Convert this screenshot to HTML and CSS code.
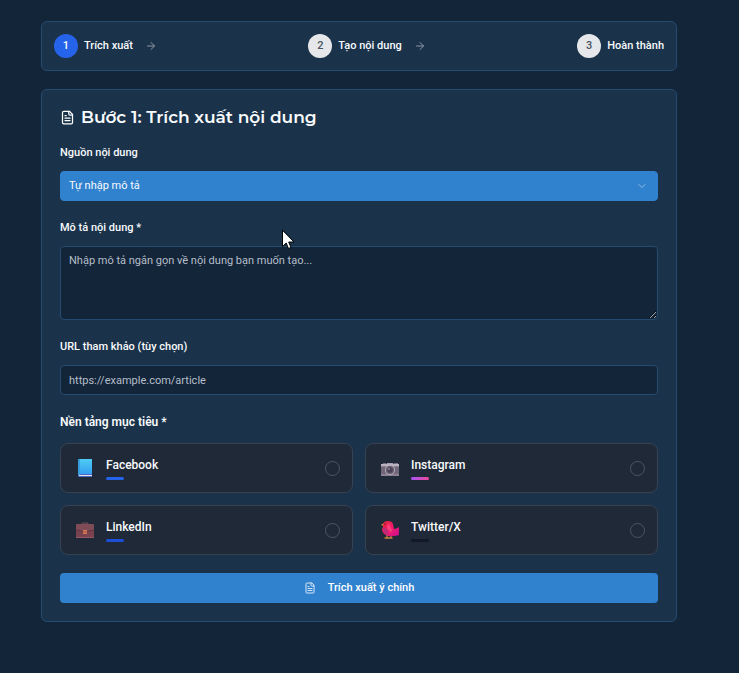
FILE: index.html
```html
<!DOCTYPE html>
<html lang="vi">
<head>
<meta charset="utf-8">
<meta name="viewport" content="width=device-width, initial-scale=1">
<title>Trích xuất nội dung</title>
<link rel="stylesheet" href="styles.css">
</head>
<body>
<main class="page">
  <ol class="panel steps">
    <li class="step">
      <span class="step-number is-active">1</span>
      <span>Trích xuất</span>
      <svg class="step-arrow" viewBox="0 0 24 24" aria-hidden="true"><path d="M5 12h14M12 5l7 7-7 7"/></svg>
    </li>
    <li class="step">
      <span class="step-number">2</span>
      <span>Tạo nội dung</span>
      <svg class="step-arrow" viewBox="0 0 24 24" aria-hidden="true"><path d="M5 12h14M12 5l7 7-7 7"/></svg>
    </li>
    <li class="step">
      <span class="step-number">3</span>
      <span>Hoàn thành</span>
    </li>
  </ol>

  <form class="panel form">
    <h1 class="title">
      <svg class="title-icon" viewBox="0 0 24 24" aria-hidden="true"><path d="M15 2H6a2 2 0 0 0-2 2v16a2 2 0 0 0 2 2h12a2 2 0 0 0 2-2V7z"/><path d="M14 2v4a2 2 0 0 0 2 2h4M10 9H8M16 13H8M16 17H8"/></svg>
      Bước 1: Trích xuất nội dung
    </h1>

    <div class="field">
      <label for="source">Nguồn nội dung</label>
      <div class="select-wrap">
        <select id="source" class="control select"><option>Tự nhập mô tả</option></select>
        <svg class="chevron" viewBox="0 0 24 24" aria-hidden="true"><path d="m6 9 6 6 6-6"/></svg>
      </div>
    </div>

    <div class="field">
      <label for="description">Mô tả nội dung *</label>
      <textarea id="description" class="control textarea" placeholder="Nhập mô tả ngắn gọn về nội dung bạn muốn tạo..."></textarea>
    </div>

    <div class="field">
      <label for="url">URL tham khảo (tùy chọn)</label>
      <input id="url" type="url" class="control" placeholder="https://example.com/article">
    </div>

    <fieldset class="platforms">
      <legend>Nền tảng mục tiêu *</legend>
      <div class="options">
        <label class="option">
          <svg class="emoji" viewBox="0 0 24 24" aria-hidden="true">
            <defs><linearGradient id="book" x2="0" y2="1"><stop stop-color="#4fcdf5"/><stop offset="1" stop-color="#359ff0"/></linearGradient></defs>
            <path d="M5 3h14v18H6a1 1 0 0 1-1-1z" fill="#4d6ac2"/>
            <path d="M5 3h2v16H5z" fill="#3a9ddb"/>
            <path d="M7 3h12v15H7z" fill="url(#book)"/>
            <path d="M6 19h13v1H6z" fill="#e6ddf2"/>
          </svg>
          <span class="option-text">Facebook<span class="bar facebook"></span></span>
          <input type="checkbox" class="tick">
        </label>
        <label class="option">
          <svg class="emoji" viewBox="0 0 24 24" aria-hidden="true">
            <path d="M5 7h3v2H5zM16 7h4v2h-4z" fill="#787080"/>
            <path d="M9 7h6l1 2H8z" fill="#aaa2b0"/>
            <path d="M3 8h18v12H3z" fill="#8b8193"/>
            <path d="M3 8h18v2H3z" fill="#b9b2bf"/>
            <path d="M3 11h18v7H3z" fill="#706878"/>
            <circle cx="12" cy="14" r="5" fill="#b5adbc"/>
            <circle cx="12" cy="14" r="4" fill="#625969"/>
            <circle cx="12" cy="14" r="2.500" fill="#4c4358"/>
            <circle cx="11" cy="13" r="1" fill="#8d8298"/>
          </svg>
          <span class="option-text">Instagram<span class="bar instagram"></span></span>
          <input type="checkbox" class="tick">
        </label>
        <label class="option">
          <svg class="emoji" viewBox="0 0 24 24" aria-hidden="true">
            <path d="M9 7V6q0-1 1-1h4q1 0 1 1v1" fill="none" stroke="#795058" stroke-width="1.2"/>
            <path d="M4 6h16l1 1v13H3V7z" fill="#78434f"/>
            <path d="M4 6h16l1 1v5q-9 3-18 0V7z" fill="#7f4b57"/>
            <path d="M3 12q9 3 18 0" fill="none" stroke="#573440"/>
            <path d="M3 19h18v1H3z" fill="#925866"/>
            <path d="M10 12h4v4h-4z" fill="#d27855"/>
            <path d="M10 14h4" stroke="#a65448"/>
          </svg>
          <span class="option-text">LinkedIn<span class="bar linkedin"></span></span>
          <input type="checkbox" class="tick">
        </label>
        <label class="option">
          <svg class="emoji" viewBox="0 0 24 24" aria-hidden="true">
            <defs><linearGradient id="bird" x2="1" y2="1"><stop stop-color="#e52235"/><stop offset=".55" stop-color="#f01c70"/><stop offset="1" stop-color="#c60b91"/></linearGradient></defs>
            <path d="M9 17v3H7M13 17v3h-2M7 20h7" fill="none" stroke="#c78340" stroke-width="1.3"/>
            <path d="M6 5 3 7l3 1z" fill="#eba642"/>
            <path d="M5 7q0-4 5-4 4 0 5 3l1 5q2 0 5-2v8q-2 1-6 1-4 1-7-1-4-2-4-6l1-2z" fill="url(#bird)"/>
            <path d="M5 10q4-1 5 4v3q-4-1-5-5z" fill="#b92d78"/>
            <path d="M10 5q4 5 4 9-4-1-5-4z" fill="#fa3f7b"/>
            <circle cx="7" cy="6" r=".8" fill="#671b2b"/>
          </svg>
          <span class="option-text">Twitter/X<span class="bar twitter"></span></span>
          <input type="checkbox" class="tick">
        </label>
      </div>
    </fieldset>

    <button type="button" class="submit">
      <svg class="submit-icon" viewBox="0 0 24 24" aria-hidden="true"><path d="M15 2H6a2 2 0 0 0-2 2v16a2 2 0 0 0 2 2h12a2 2 0 0 0 2-2V7z"/><path d="M14 2v4a2 2 0 0 0 2 2h4M10 9H8M16 13H8M16 17H8"/></svg>
      Trích xuất ý chính
    </button>
  </form>
</main>
<svg class="pointer" viewBox="0 0 12 19" aria-hidden="true"><path d="M.5.5v16l3.700-3.500 2.300 5.500 2.500-1-2.300-5.500h5z" fill="#fff" stroke="#000"/></svg>
</body>
</html>
```
FILE: styles.css
```css
* { box-sizing: border-box; }

body {
  margin: 0;
  min-height: 100vh;
  background: #132539;
  color: #f8fafc;
  font: 500 11px/18px Roboto, sans-serif;
}

svg {
  flex: none;
  fill: none;
  stroke-linecap: round;
  stroke-linejoin: round;
}

.page {
  display: grid;
  gap: 18px;
  padding: 21px 62px 48px 41px;
}

.panel {
  margin: 0;
  background: #1a334b;
  border: 1px solid #254b70;
  border-radius: 6px;
}

.steps {
  display: flex;
  justify-content: space-between;
  padding: 12px;
  list-style: none;
}

.step { display: flex; align-items: center; gap: 6px; }

.step-number {
  width: 24px;
  height: 24px;
  border-radius: 50%;
  background: #e5e7eb;
  color: #4b5563;
  line-height: 24px;
  text-align: center;
}

.step-number.is-active { background: #2563eb; color: #fff; }

.step-arrow {
  width: 12px;
  height: 12px;
  margin-left: 6px;
  stroke: #8d97a5;
  stroke-width: 2;
}

.form {
  display: flex;
  flex-direction: column;
  gap: 18px;
  padding: 18px;
}

.title {
  display: flex;
  align-items: center;
  gap: 6px;
  margin: 0;
  font: 600 17px/18px Montserrat, Inter, sans-serif;
}

.title-icon { width: 15px; height: 15px; stroke: #fff; stroke-width: 2; }

.field { display: flex; flex-direction: column; gap: 9px; }

.control {
  display: block;
  width: 100%;
  height: 30px;
  margin: 0;
  padding: 5px 8px;
  border: 1px solid #254b70;
  border-radius: 4px;
  background: #132539;
  color: #f8fafc;
  font: 400 11px/18px Roboto, sans-serif;
}

.control::placeholder { color: #b6bec9; opacity: 1; }

.textarea { height: 74px; resize: vertical; }

.select-wrap { position: relative; }

.select {
  appearance: none;
  background: #3182ce;
  border-color: #3182ce;
}

.chevron {
  position: absolute;
  top: 9px;
  right: 10px;
  width: 12px;
  height: 12px;
  stroke: #91bbe4;
  stroke-width: 2;
  pointer-events: none;
}

.platforms { min-width: 0; margin: 0; padding: 0; border: 0; }

.platforms legend {
  margin-bottom: 12px;
  padding: 0;
  font-size: 12px;
  font-weight: 600;
}

.options {
  display: grid;
  grid-template-columns: 1fr 1fr;
  gap: 12px;
}

.option {
  display: flex;
  align-items: center;
  gap: 9px;
  padding: 12px;
  border: 1px solid #374151;
  border-radius: 8px;
  background: #1f2937;
  font-size: 12px;
}

.emoji { width: 24px; height: 24px; }

.option-text { flex: 1; }

.bar {
  display: block;
  width: 18px;
  height: 3px;
  margin-top: 3px;
  border-radius: 2px;
}

.facebook { background: #2563eb; }
.instagram { background: linear-gradient(90deg, #a855f7, #ec4899); }
.linkedin { background: #1d4ed8; }
.twitter { background: #111827; }

.tick {
  appearance: none;
  width: 15px;
  height: 15px;
  margin: 0;
  border: 1px solid #4b5563;
  border-radius: 50%;
}

.tick:checked { background: #2563eb; }

.submit {
  display: flex;
  align-items: center;
  justify-content: center;
  gap: 12px;
  height: 30px;
  padding: 0 12px;
  border: 0;
  border-radius: 4px;
  background: #3182ce;
  color: #fff;
  font: inherit;
}

.submit-icon { width: 12px; height: 12px; stroke: #d5e6f5; stroke-width: 2; }

.pointer {
  position: absolute;
  top: 230px;
  left: 282px;
  width: 12px;
  height: 19px;
  pointer-events: none;
}
```
